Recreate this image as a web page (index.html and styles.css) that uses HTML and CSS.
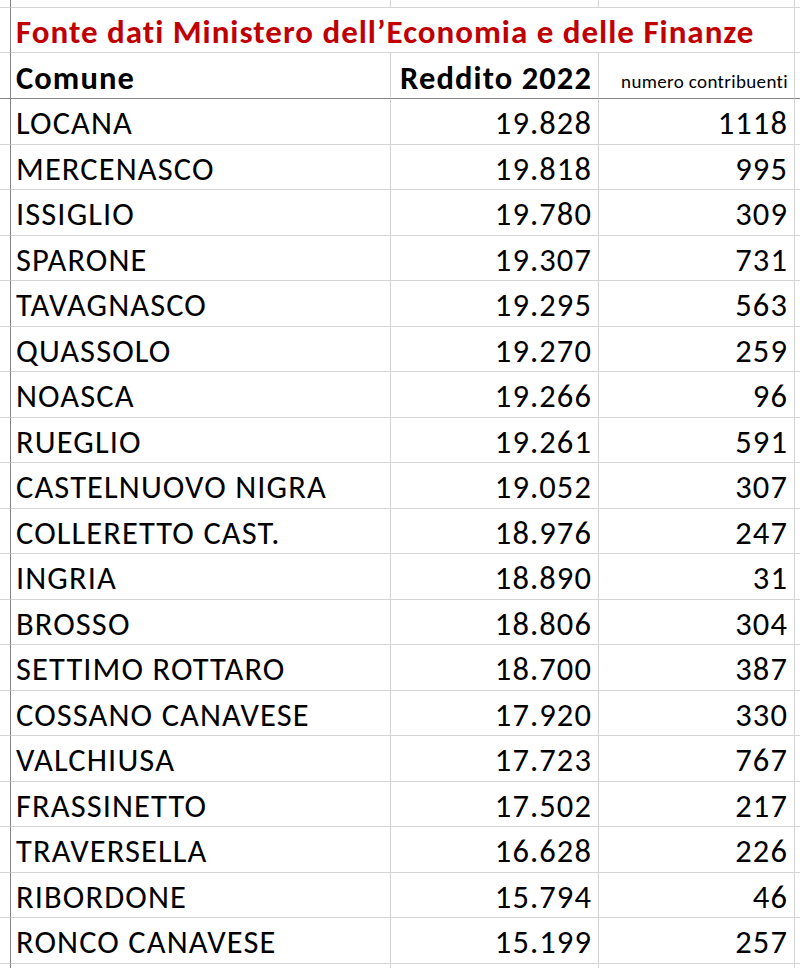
FILE: index.html
```html
<!DOCTYPE html>
<html lang="it">
<head>
<meta charset="utf-8">
<title>Redditi 2022</title>
<link rel="stylesheet" href="styles.css">
</head>
<body>
<div class="sheet">
  <div class="cell c0 top"></div><div class="cell c1 top"></div><div class="cell c2 top"></div><div class="cell c3 top"></div><div class="cell c4 top"></div>

  <div class="cell c0"></div>
  <div class="cell title">Fonte dati Ministero dell’Economia e delle Finanze</div>
  <div class="cell c4"></div>

  <div class="cell c0 head"></div>
  <div class="cell c1 head hb">Comune</div>
  <div class="cell c2 head hb num">Reddito 2022</div>
  <div class="cell c3 head num small">numero contribuenti</div>
  <div class="cell c4 head"></div>

  <div class="cell c0"></div><div class="cell c1">LOCANA</div><div class="cell c2 num">19.828</div><div class="cell c3 num">1118</div><div class="cell c4"></div>
  <div class="cell c0"></div><div class="cell c1">MERCENASCO</div><div class="cell c2 num">19.818</div><div class="cell c3 num">995</div><div class="cell c4"></div>
  <div class="cell c0"></div><div class="cell c1">ISSIGLIO</div><div class="cell c2 num">19.780</div><div class="cell c3 num">309</div><div class="cell c4"></div>
  <div class="cell c0"></div><div class="cell c1">SPARONE</div><div class="cell c2 num">19.307</div><div class="cell c3 num">731</div><div class="cell c4"></div>
  <div class="cell c0"></div><div class="cell c1">TAVAGNASCO</div><div class="cell c2 num">19.295</div><div class="cell c3 num">563</div><div class="cell c4"></div>
  <div class="cell c0"></div><div class="cell c1">QUASSOLO</div><div class="cell c2 num">19.270</div><div class="cell c3 num">259</div><div class="cell c4"></div>
  <div class="cell c0"></div><div class="cell c1">NOASCA</div><div class="cell c2 num">19.266</div><div class="cell c3 num">96</div><div class="cell c4"></div>
  <div class="cell c0"></div><div class="cell c1">RUEGLIO</div><div class="cell c2 num">19.261</div><div class="cell c3 num">591</div><div class="cell c4"></div>
  <div class="cell c0"></div><div class="cell c1">CASTELNUOVO NIGRA</div><div class="cell c2 num">19.052</div><div class="cell c3 num">307</div><div class="cell c4"></div>
  <div class="cell c0"></div><div class="cell c1">COLLERETTO CAST.</div><div class="cell c2 num">18.976</div><div class="cell c3 num">247</div><div class="cell c4"></div>
  <div class="cell c0"></div><div class="cell c1">INGRIA</div><div class="cell c2 num">18.890</div><div class="cell c3 num">31</div><div class="cell c4"></div>
  <div class="cell c0"></div><div class="cell c1">BROSSO</div><div class="cell c2 num">18.806</div><div class="cell c3 num">304</div><div class="cell c4"></div>
  <div class="cell c0"></div><div class="cell c1">SETTIMO ROTTARO</div><div class="cell c2 num">18.700</div><div class="cell c3 num">387</div><div class="cell c4"></div>
  <div class="cell c0"></div><div class="cell c1">COSSANO CANAVESE</div><div class="cell c2 num">17.920</div><div class="cell c3 num">330</div><div class="cell c4"></div>
  <div class="cell c0"></div><div class="cell c1">VALCHIUSA</div><div class="cell c2 num">17.723</div><div class="cell c3 num">767</div><div class="cell c4"></div>
  <div class="cell c0"></div><div class="cell c1">FRASSINETTO</div><div class="cell c2 num">17.502</div><div class="cell c3 num">217</div><div class="cell c4"></div>
  <div class="cell c0"></div><div class="cell c1">TRAVERSELLA</div><div class="cell c2 num">16.628</div><div class="cell c3 num">226</div><div class="cell c4"></div>
  <div class="cell c0"></div><div class="cell c1">RIBORDONE</div><div class="cell c2 num">15.794</div><div class="cell c3 num">46</div><div class="cell c4"></div>
  <div class="cell c0"></div><div class="cell c1">RONCO CANAVESE</div><div class="cell c2 num">15.199</div><div class="cell c3 num">257</div><div class="cell c4"></div>
  <div class="cell c0"></div><div class="cell c1"></div><div class="cell c2"></div><div class="cell c3"></div><div class="cell c4"></div>
</div>
</body>
</html>
```

FILE: styles.css
```css
html, body {
  margin: 0;
  padding: 0;
  background: #ffffff;
  overflow: hidden;
}

.sheet {
  display: grid;
  grid-template-columns: 11px 380px 208px 196px 5px;
  grid-template-rows: 8px 45px 46px repeat(19, 45.53px) 20px;
  font-family: "Carlito", "Lato", sans-serif;
  color: #000000;
  width: 800px;
}

.cell {
  box-sizing: border-box;
  border-right: 1px solid #d4d4d4;
  border-bottom: 1px solid #d4d4d4;
  display: flex;
  align-items: flex-end;
  padding: 0 6px 4px 5px;
  font-size: 32.5px;
  letter-spacing: 1.1px;
  line-height: 1;
  white-space: nowrap;
}

.c0 {
  padding: 0;
  border-right: 1px solid #858585;
}

.c4 {
  padding: 0;
  border-right: none;
}

.top {
  padding: 0;
}

.title {
  grid-column: 2 / 5;
  color: #c00000;
  font-weight: bold;
  font-size: 33px;
  letter-spacing: 1px;
  padding-bottom: 3.5px;
}

.head {
  border-bottom: 1px solid #858585;
}

.hb {
  font-weight: bold;
  padding-bottom: 4px;
}

.num {
  justify-content: flex-end;
}

.small {
  font-size: 19px;
  letter-spacing: 0.35px;
  padding-bottom: 7px;
}
```
